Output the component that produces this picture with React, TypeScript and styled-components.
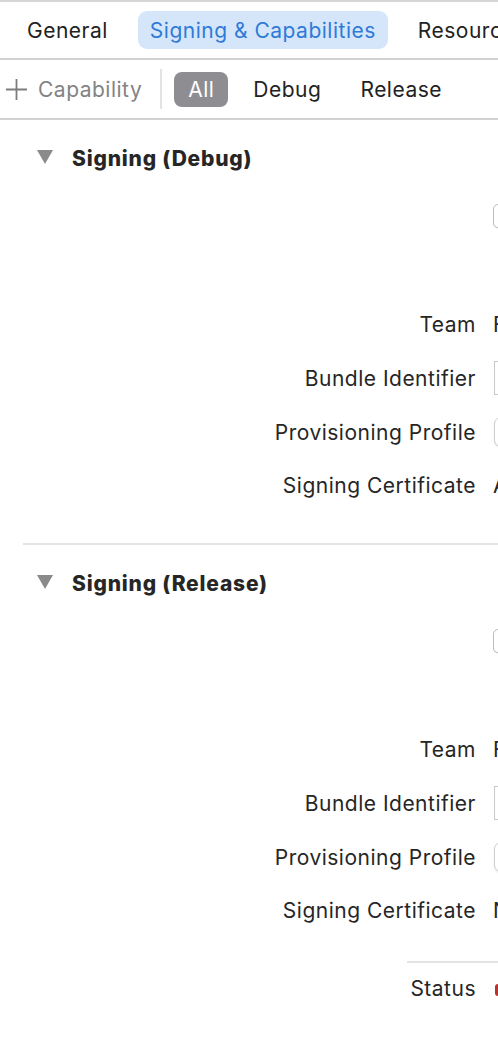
import React from "react";
import styled, { createGlobalStyle } from "styled-components";

const Global = createGlobalStyle`
  html, body {
    margin: 0;
    padding: 0;
    background: #ffffff;
    overflow: hidden;
  }
  body {
    font-family: Inter, "Noto Sans", "Liberation Sans", sans-serif;
    color: #262626;
    -webkit-font-smoothing: antialiased;
  }
`;

const Page = styled.div`
  width: 498px;
  height: 1052px;
  overflow: hidden;
  background: #fff;
`;

const TabBar = styled.div`
  height: 56px;
  border-top: 2px solid #d6d6d6;
  border-bottom: 2px solid #d2d2d2;
  display: flex;
  align-items: center;
  gap: 18px;
  padding-left: 15px;
  white-space: nowrap;
`;

const Tab = styled.div<{ $active?: boolean }>`
  height: 38px;
  display: flex;
  align-items: center;
  padding: 0 12px;
  border-radius: 9px;
  font-size: 21px;
  letter-spacing: 0.5px;
  background: ${(p) => (p.$active ? "#d5e6fb" : "transparent")};
  color: ${(p) => (p.$active ? "#2f7ad8" : "#222")};
  flex-shrink: 0;
`;

const FilterBar = styled.div`
  height: 58px;
  border-bottom: 2px solid #d2d2d2;
  display: flex;
  align-items: center;
  padding-left: 5px;
  white-space: nowrap;
`;

const AddButton = styled.div`
  display: flex;
  align-items: center;
  gap: 10px;
  color: #838383;
  font-size: 21px;
  letter-spacing: 0.5px;
`;

const VDivider = styled.div`
  width: 2px;
  height: 40px;
  background: #e3e3e3;
  margin: 0 12px 0 18px;
`;

const Segments = styled.div`
  display: flex;
  align-items: center;
  gap: 11px;
`;

const Segment = styled.div<{ $active?: boolean }>`
  height: 35px;
  display: flex;
  align-items: center;
  padding: 0 14px;
  border-radius: 8px;
  font-size: 21px;
  letter-spacing: 0.5px;
  background: ${(p) => (p.$active ? "#8e8e92" : "transparent")};
  color: ${(p) => (p.$active ? "#fff" : "#222")};
`;

const Section = styled.section<{ $divider?: boolean; $bottom: number }>`
  padding-top: 19px;
  padding-bottom: ${(p) => p.$bottom}px;
  margin-left: 23px;
  ${(p) => (p.$divider ? "border-bottom: 2px solid #e4e4e4;" : "")}
`;

const Header = styled.div`
  height: 38px;
  display: flex;
  align-items: center;
  gap: 19px;
  padding-left: 14px;
`;

const Disclosure = styled.div`
  width: 0;
  height: 0;
  border-left: 8.5px solid transparent;
  border-right: 8.5px solid transparent;
  border-top: 14px solid #8a8a8a;
  margin-top: -2px;
`;

const Title = styled.div`
  font-size: 21px;
  font-weight: 800;
  letter-spacing: 0.8px;
  color: #262626;
`;

const Form = styled.div`
  margin-top: 12px;
  display: grid;
  grid-template-columns: 453px 300px;
  column-gap: 17px;
  white-space: nowrap;
`;

const Label = styled.div<{ $h: number }>`
  height: ${(p) => p.$h}px;
  display: flex;
  align-items: center;
  justify-content: flex-end;
  font-size: 21px;
  letter-spacing: 0.5px;
  color: #262626;
`;

const Value = styled.div<{ $h: number }>`
  height: ${(p) => p.$h}px;
  display: flex;
  align-items: center;
  font-size: 21px;
  letter-spacing: 0.5px;
  color: #262626;
`;

const CheckBox = styled.div`
  width: 22px;
  height: 22px;
  border: 1px solid #bdbdbd;
  border-radius: 5px;
  background: #fff;
  box-shadow: 0 1px 1px rgba(0, 0, 0, 0.06);
`;

const TextField = styled.div`
  width: 260px;
  height: 32px;
  border: 1px solid #c9c9c9;
  background: #fff;
  margin-left: 1px;
`;

const PopUp = styled.div`
  width: 260px;
  height: 28px;
  border: 1px solid #cfcfcf;
  border-radius: 7px;
  background: #fff;
  box-shadow: 0 1px 2px rgba(0, 0, 0, 0.1);
  margin-left: 1px;
`;

const StatusGrid = styled.div`
  margin-left: 407px;
  border-top: 2px solid #e4e4e4;
  display: grid;
  grid-template-columns: 69px 300px;
  column-gap: 17px;
  white-space: nowrap;
`;

const StatusIcon = styled.div`
  width: 14px;
  height: 12px;
  border-radius: 3px;
  background: #b8332d;
  margin-left: 2px;
  margin-top: 3px;
`;

function PlusIcon() {
  return (
    <svg width="23" height="23" viewBox="0 0 23 23" fill="none">
      <path d="M11.5 1v21M1 11.5h21" stroke="#7d7d7d" strokeWidth="1.8" />
    </svg>
  );
}

type Props = { title: string; cert: string; divider?: boolean; bottom: number };

function SigningSection({ title, cert, divider, bottom }: Props) {
  return (
    <Section $divider={divider} $bottom={bottom}>
      <Header>
        <Disclosure />
        <Title>{title}</Title>
      </Header>
      <Form>
        <Label $h={54} />
        <Value $h={54}>
          <CheckBox />
        </Value>
        <Label $h={54} />
        <Value $h={54} />
        <Label $h={54}>Team</Label>
        <Value $h={54}>Firebase Team</Value>
        <Label $h={54}>Bundle Identifier</Label>
        <Value $h={54}>
          <TextField />
        </Value>
        <Label $h={54}>Provisioning Profile</Label>
        <Value $h={54}>
          <PopUp />
        </Value>
        <Label $h={52}>Signing Certificate</Label>
        <Value $h={52}>{cert}</Value>
      </Form>
    </Section>
  );
}

export default function App() {
  return (
    <Page>
      <Global />
      <TabBar>
        <Tab>General</Tab>
        <Tab $active>Signing &amp; Capabilities</Tab>
        <Tab>Resource Tags</Tab>
      </TabBar>
      <FilterBar>
        <AddButton>
          <PlusIcon />
          Capability
        </AddButton>
        <VDivider />
        <Segments>
          <Segment $active>All</Segment>
          <Segment>Debug</Segment>
          <Segment>Release</Segment>
        </Segments>
      </FilterBar>
      <SigningSection title="Signing (Debug)" cert="Apple Development" divider bottom={32} />
      <SigningSection title="Signing (Release)" cert="None" bottom={25} />
      <StatusGrid>
        <Label $h={50}>Status</Label>
        <Value $h={50}>
          <StatusIcon />
        </Value>
      </StatusGrid>
    </Page>
  );
}
